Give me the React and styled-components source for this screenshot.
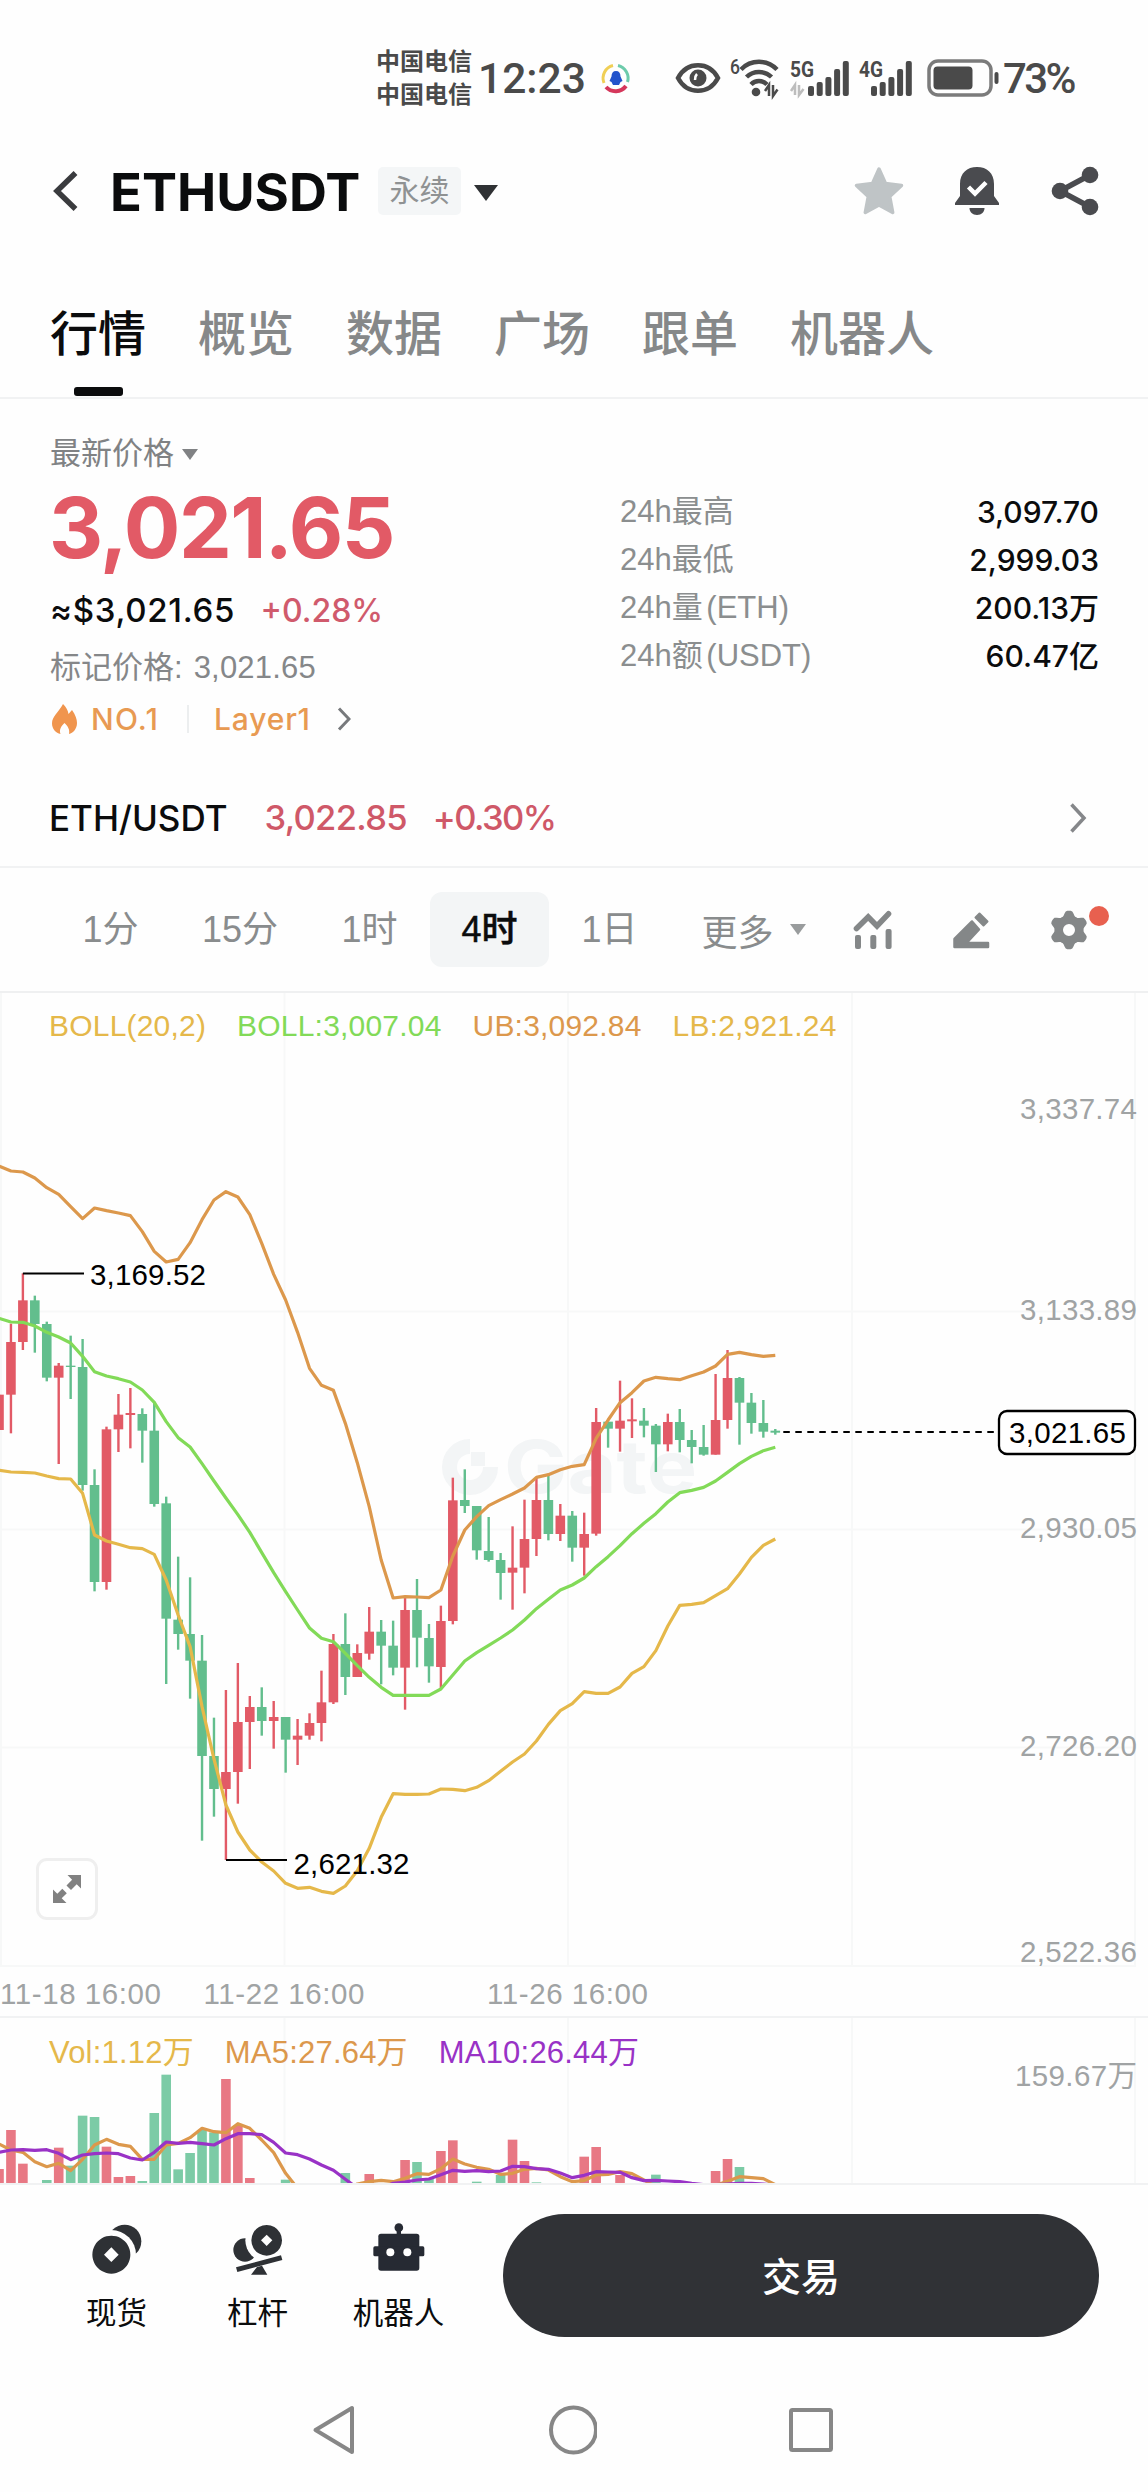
import React from "react";
import styled, { createGlobalStyle } from "styled-components";

const RED = "#e25a66";
const GREEN = "#62be8d";
const ORANGE = "#dc984c";
const LIME = "#82da58";
const YELLOW = "#e5b84a";
const PURPLE = "#9932c6";

const STEP = 11.943;
const xAt = (i) => i * STEP - 1;
// chart values are kept in thirds of a pixel below a base line
const scale = (base, values) => values.map((v) => base + v / 3);
const scaleRows = (base, rows) =>
  rows.map(([color, ...ys]) => [color, ...scale(base, ys)]);

// color, high, body top, body bottom, low
const candles = [
  ...scaleRows(1080, [
    ["r", 944, 944, 1050, 1050],
    ["r", 731, 786, 944, 1060],
    ["r", 580, 661, 786, 810],
    ["g", 647, 661, 732, 818],
    ["g", 725, 732, 893, 904],
    ["r", 849, 857, 893, 1152],
    ["g", 767, 857, 861, 957],
    ["g", 777, 861, 1215, 1232],
    ["g", 1168, 1215, 1506, 1534],
    ["r", 1040, 1048, 1506, 1529],
    ["r", 942, 1004, 1048, 1116],
    ["r", 924, 999, 1005, 1105],
    ["g", 985, 1002, 1052, 1148],
    ["g", 965, 1052, 1272, 1280],
    ["g", 1250, 1270, 1616, 1812],
  ]),
  ...scaleRows(1500, [
    ["g", 170, 359, 402, 449],
    ["g", 232, 402, 482, 596],
    ["g", 405, 482, 768, 1022],
    ["g", 653, 768, 867, 950],
    ["r", 570, 816, 867, 1080],
    ["r", 489, 666, 816, 911],
    ["r", 588, 621, 666, 807],
    ["g", 562, 621, 663, 707],
    ["r", 603, 651, 663, 746],
    ["g", 651, 651, 719, 818],
    ["r", 657, 707, 719, 795],
    ["r", 640, 669, 707, 719],
    ["r", 512, 607, 669, 724],
    ["r", 402, 432, 607, 612],
    ["g", 340, 432, 531, 585],
    ["r", 433, 459, 531, 531],
    ["r", 321, 395, 461, 479],
    ["g", 360, 395, 437, 553],
    ["g", 362, 437, 503, 526],
    ["r", 294, 330, 503, 629],
    ["g", 237, 330, 413, 502],
    ["g", 372, 414, 499, 548],
  ]),
  ...scaleRows(1300, [
    ["r", 917, 963, 1101, 1165],
    ["r", 533, 601, 963, 973],
    ["g", 508, 600, 618, 639],
    ["g", 618, 618, 751, 779],
    ["g", 651, 753, 780, 785],
    ["g", 759, 780, 819, 899],
    ["r", 679, 803, 818, 929],
    ["r", 599, 717, 803, 880],
    ["r", 532, 600, 717, 768],
    ["g", 522, 600, 702, 721],
    ["r", 612, 647, 702, 723],
    ["g", 633, 647, 743, 785],
    ["r", 638, 702, 743, 827],
    ["r", 324, 366, 701, 707],
    ["g", 365, 365, 386, 443],
    ["r", 242, 362, 386, 455],
    ["r", 295, 358, 364, 414],
    ["g", 324, 362, 377, 412],
    ["g", 372, 377, 433, 516],
    ["r", 341, 366, 433, 454],
    ["g", 327, 366, 420, 457],
    ["g", 390, 420, 441, 490],
    ["g", 375, 441, 464, 467],
    ["r", 222, 360, 464, 464],
    ["r", 150, 234, 360, 386],
    ["g", 231, 234, 308, 434],
    ["g", 279, 308, 369, 401],
    ["g", 300, 369, 395, 413],
    ["g", 387, 392, 398, 404],
  ]),
];

const upper = [
  ...scale(1080, [
    258, 273, 276, 294, 323, 343, 380, 416, 384, 392, 399, 407, 455, 514, 546,
    538, 488, 419, 360, 335, 351, 404, 490, 583, 660, 757, 865, 916, 931, 1030,
    1148, 1280, 1440, 1554, 1550, 1551, 1553,
  ]),
  ...scale(1300, [
    870, 768, 690, 650, 617, 599, 582, 564, 532, 524, 509, 499, 494, 415, 360,
    308, 278, 243, 232, 236, 239, 227, 216, 198, 163, 157, 164, 169, 166,
  ]),
];
const middle = [
  ...scale(1080, [
    715, 726, 727, 738, 757, 771, 789, 829, 875, 888, 896, 906, 930, 967, 1025,
    1073, 1101, 1151, 1203, 1254, 1304, 1357, 1418, 1478, 1535, 1590, 1644,
    1675, 1685, 1720, 1757, 1792, 1822, 1846, 1846, 1846, 1846,
  ]),
  ...scale(1300, [
    1167, 1125, 1083, 1058, 1036, 1014, 990, 960, 926, 898, 870, 855, 834, 800,
    770, 737, 701, 670, 641, 606, 578, 571, 562, 543, 517, 491, 469, 452, 442,
  ]),
];
const lower = [
  ...scale(1080, [1171, 1176, 1177, 1179, 1188, 1196, 1197, 1240]),
  ...scale(1500, [
    105, 123, 133, 143, 146, 163, 240, 345, 440, 620, 777, 915, 996, 1050, 1086,
    1113, 1150, 1165, 1162, 1174, 1180, 1158, 1112, 1045, 952, 881, 883, 883,
    882, 867, 868, 872, 862, 842, 814, 786,
  ]),
  ...scale(1300, [
    1362, 1323, 1273, 1232, 1211, 1175, 1180, 1180, 1161, 1120, 1100, 1052, 978,
    916, 913, 908, 887, 866, 822, 772, 736, 717,
  ]),
];

// index, color, top
const volumes = [
  [0, "r", 627], [1, "r", 510], [2, "r", 611], [4, "g", 660], [5, "r", 563],
  [6, "g", 617], [7, "g", 467], [8, "g", 471], [9, "r", 560], [10, "r", 651],
  [11, "r", 648], [12, "g", 663], [13, "g", 459], [14, "g", 344],
  [15, "g", 628], [16, "g", 579], [17, "g", 510], [18, "g", 517],
  [19, "r", 357], [20, "r", 497], [21, "r", 654], [24, "g", 659],
  [29, "g", 639], [31, "r", 642], [34, "r", 600], [35, "g", 606],
  [36, "g", 655], [37, "r", 573], [38, "r", 541], [40, "g", 665],
  [42, "g", 645], [43, "r", 539], [44, "r", 603], [45, "g", 667],
  [49, "r", 590], [50, "r", 561], [52, "r", 645], [55, "g", 644],
  [60, "r", 633], [61, "r", 597], [62, "g", 621],
];
const ma5 = scale(1960, [
  552, 570, 577, 605, 620, 610, 632, 598, 555, 538, 553, 559, 598, 598, 555,
  550, 533, 505, 515, 518, 491, 505, 540, 578, 640, 685, 700, 700, 700, 690,
  672, 665, 661, 665, 655, 641, 643, 626, 597, 612, 622, 628, 643, 640, 628,
  625, 630, 650, 665, 662, 645, 643, 635, 641, 660, 680, 690, 690, 690, 690,
  676, 664, 650, 653, 656, 674,
]);
const ma10 = scale(1960, [
  577, 570, 569, 571, 569, 580, 599, 585, 581, 579, 581, 594, 600, 577, 546,
  550, 547, 551, 555, 536, 521, 521, 524, 547, 579, 584, 597, 615, 631, 658,
  684, 690, 684, 670, 666, 660, 657, 644, 631, 634, 632, 635, 633, 619, 620,
  626, 628, 639, 653, 646, 635, 636, 637, 653, 662, 661, 663, 665, 670, 674,
  674, 672, 670, 670, 672, 676,
]);

const points = (ys) => ys.map((y, i) => `${xAt(i)},${y}`).join(" ");

const gearPath = () => {
  const pts = [];
  for (let a = 0; a < 360; a += 5) {
    const t = (a * Math.PI) / 180;
    const wave = Math.cos(6 * (t - Math.PI / 2));
    const r = 17.2 + 2.6 * Math.max(-1, Math.min(0.8, wave * 1.3));
    pts.push(`${20 + r * Math.cos(t)} ${20 + r * Math.sin(t)}`);
  }
  return `M${pts.join("L")}Z M26 20a6 6 0 1 0 -12 0a6 6 0 1 0 12 0Z`;
};

const intervals = [
  { label: "1分", width: 118 },
  { label: "15分", width: 138 },
  { label: "1时", width: 118 },
  { label: "4时", width: 119, active: true },
  { label: "1日", width: 118 },
];
const stats = [
  ["24h最高", "3,097.70"],
  ["24h最低", "2,999.03"],
  ["24h量 (ETH)", "200.13万"],
  ["24h额 (USDT)", "60.47亿"],
];

function StatusBar() {
  return (
    <Status>
      <Carriers>
        <span>中国电信</span>
        <span>中国电信</span>
      </Carriers>
      <Clock>12:23</Clock>
      {/* app notification */}
      <StatusIcon $left={16} width="30" height="30" viewBox="0 0 30 30" fill="none">
        <path d="M12 2.5A13 13 0 0 0 3 20" stroke="#f0cf55" strokeWidth="3" />
        <path d="M17 2.5A13 13 0 0 1 26.5 19" stroke="#6dcbab" strokeWidth="3" />
        <path d="M5 24A13 13 0 0 0 25 23" stroke="#d5375b" strokeWidth="4" />
        <path d="M15 8c3 0 4.500 2 4.500 5.500l2 4.500-2 1-1.500 3h-6l-1.500-3-2-1 2-4.500C10.500 10 12 8 15 8Z" fill="#2253cb" />
      </StatusIcon>
      <StatusIcon $left={44} width="46" height="32" viewBox="0 0 46 32" fill="none">
        <path d="M3 16C12 -1 34 -1 43 16C34 33 12 33 3 16Z" stroke="#4a4a4a" strokeWidth="4.500" />
        <circle cx="23" cy="16" r="8.500" fill="#4a4a4a" />
        <path d="M22 12c-2 2-2 4-2 6" stroke="#fff" strokeWidth="2.500" />
      </StatusIcon>
      <StatusIcon $left={9} width="50" height="40" viewBox="0 0 50 40" fill="none">
        <text x="0" y="16" fontSize="21" fontWeight="500" fill="#4a4a4a" textLength="10" lengthAdjust="spacingAndGlyphs">6</text>
        <g stroke="#4a4a4a" strokeWidth="4.500">
          <path d="M11 11.500a25 25 0 0 1 36 0" />
          <path d="M16.500 19a18 18 0 0 1 25 0" />
          <path d="M21 26.500a11 11 0 0 1 16 0" />
        </g>
        <circle cx="26" cy="34" r="4.300" fill="#4a4a4a" />
        <path d="M39 38V27l-4 6M43 27v11l4.500-6.500" stroke="#4a4a4a" strokeWidth="2.500" />
      </StatusIcon>
      <Signal left={10} label="5G" arrows />
      <Signal left={9} label="4G" />
      <StatusIcon $left={14} width="72" height="38" viewBox="0 0 72 38" fill="none">
        <rect x="2" y="2" width="62" height="34" rx="9" stroke="#7b7b7b" strokeWidth="3.500" />
        <rect x="6.500" y="7.500" width="39" height="23" rx="4" fill="#4a4a4a" />
        <rect x="67.500" y="13" width="4" height="12" rx="2" fill="#4a4a4a" />
      </StatusIcon>
      <Battery>73%</Battery>
    </Status>
  );
}

function Signal({ left, label, arrows }) {
  const start = arrows ? 18 : 12;
  return (
    <StatusIcon $left={left} width={arrows ? 60 : 54} height="38" viewBox={arrows ? "0 0 60 38" : "0 0 54 38"}>
      <text x="0" y="17.500" fontSize="22" fontWeight="700" fill="#4a4a4a" textLength="24" lengthAdjust="spacingAndGlyphs">
        {label}
      </text>
      {arrows && <path d="M5 36V26l-4 6M9 26v10l4.500-6" stroke="#bdbdbd" strokeWidth="2.500" fill="none" />}
      {[10, 14, 19, 27, 35].map((h, i) => (
        <rect key={h} x={start + i * 8.700} y={37 - h} width="6" height={h} rx="2" fill="#4a4a4a" />
      ))}
    </StatusIcon>
  );
}

function Header() {
  return (
    <TitleBar>
      <svg width="26" height="40" viewBox="0 0 26 40" fill="none">
        <path d="M22.500 2L4 20l18.500 18" stroke="#3a3b3e" strokeWidth="5.500" />
      </svg>
      <Symbol>ETHUSDT</Symbol>
      <Badge>永续</Badge>
      <Caret $size={12} $height={16} $left={13} $top={3} $color="#2f3134" />
      <Actions>
        <svg width="52" height="50" viewBox="0 0 52 50">
          <path
            d="M26 3l6.500 14.500 16 2-11.800 11 3 16L26 39l-13.700 7.500 3-16L3.500 19.500l16-2Z"
            fill="#bfc4c6"
            stroke="#bfc4c6"
            strokeWidth="3.500"
            strokeLinejoin="round"
          />
        </svg>
        <svg width="46" height="50" viewBox="0 0 46 50" fill="none">
          <path d="M5 18C5 7 12 1 22 1s17 6 17 17v12l5 7v2H0v-2l5-7Z" fill="#4a4b4f" />
          <path d="M14.500 42h15c0 4-3 7-7.500 7s-7.500-3-7.500-7Z" fill="#4a4b4f" />
          <path d="M13.500 21l6.500 6.500L31 16.500" stroke="#fff" strokeWidth="4.500" />
        </svg>
        <svg width="48" height="50" viewBox="0 0 48 50" fill="#4a4b4f">
          <path d="M39 9L9 25l30 16" stroke="#4a4b4f" strokeWidth="5.500" fill="none" />
          <circle cx="39" cy="9" r="8.300" />
          <circle cx="9" cy="25" r="8.300" />
          <circle cx="39" cy="41" r="8.300" />
        </svg>
      </Actions>
    </TitleBar>
  );
}

function Summary() {
  return (
    <SummaryGrid>
      <div>
        <PriceLabel>
          最新价格
          <Caret $size={8.500} $height={11} $left={8} $color="#808284" />
        </PriceLabel>
        <Price>3,021.65</Price>
        <Approx>
          ≈$3,021.65 <em>+0.28%</em>
        </Approx>
        <MarkPrice>
          标记价格:<span>3,021.65</span>
        </MarkPrice>
        <Tags>
          <svg width="27" height="31" viewBox="0 0 27 31">
            <path
              d="M12 0c3 3 5 6 5.500 10l3.500-4c3.500 5 5 9 5 13 0 6-4 10-8 11 1-4-1-8-4.500-11C10 22 8 26 9.500 30 5 29 1 25 1 19.500 1 12 8 8 12 0Z"
              fill="#f0954e"
            />
          </svg>
          <TagText $left={13} $spacing={1.2}>NO.1</TagText>
          <TagDivider />
          <TagText $left={25} $spacing={0.8}>Layer1</TagText>
          <Chevron $left={26} width="14" height="24" viewBox="0 0 14 24" fill="none">
            <path d="M2 1.500L12 12 2 22.500" stroke="#77797c" strokeWidth="3" />
          </Chevron>
        </Tags>
      </div>
      <Stats>
        {stats.map(([label, value]) => (
          <StatRow key={label}>
            <span>{label}</span>
            <b>{value}</b>
          </StatRow>
        ))}
      </Stats>
    </SummaryGrid>
  );
}

function Toolbar() {
  return (
    <IntervalBar>
      {intervals.map((item) => (
        <Interval key={item.label} $width={item.width} $active={item.active}>
          {item.label}
        </Interval>
      ))}
      <More>
        更多
        <Caret $size={8.500} $height={11} $left={16} $color="#999c9d" />
      </More>
      <Tools>
        <svg width="40" height="40" viewBox="0 0 40 40" fill="#848788">
          <path d="M3.500 18.500L15.200 7 24 16 35.500 3.800" stroke="#848788" strokeWidth="5.600" strokeLinecap="round" fill="none" />
          <rect x="2" y="25" width="6" height="14" rx="2" />
          <rect x="17.300" y="25" width="6" height="14" rx="2" />
          <rect x="32.600" y="19" width="6" height="20" rx="2" />
        </svg>
        <svg width="40" height="40" viewBox="0 0 40 40" fill="#848788" stroke="#848788" strokeLinejoin="round">
          <path d="M21 11.500l7 8L15.500 33H37v4H3.500V29Z" strokeWidth="2.500" />
          <path d="M28.500 3.500l8 8-4 4-8-8Z" strokeWidth="2" />
        </svg>
        <Settings>
          <svg width="40" height="40" viewBox="0 0 40 40">
            <path d={gearPath()} fill="#848788" fillRule="evenodd" />
          </svg>
          <Dot />
        </Settings>
      </Tools>
    </IntervalBar>
  );
}

function PriceChart() {
  return (
    <ChartPanel>
      <svg width="1148" height="1024" viewBox="0 993 1148 1024">
        <g stroke="#f7f8f8" strokeWidth="2">
          {[1, 284.500, 568, 852, 1135].map((x) => (
            <path key={x} d={`M${x} 993V1966`} />
          ))}
          {[1311.500, 1529.500, 1747.500, 1966].map((y) => (
            <path key={y} d={`M0 ${y}H1136`} />
          ))}
        </g>

        {/* watermark */}
        <g fill="none" stroke="#f3f5f6" strokeWidth="15">
          <path d="M470 1446.500a20.500 20.500 0 1 0 20.500 20.500" />
          <rect x="471" y="1452" width="14" height="14" fill="#f3f5f6" stroke="none" />
        </g>
        <text x="504" y="1493" fontSize="73" fontWeight="700" fontFamily="Inter" fill="#f3f5f6" textLength="193" lengthAdjust="spacingAndGlyphs">
          Gate
        </text>

        {candles.map(([color, high, top, bottom, low], i) => (
          <g key={i} fill={color === "r" ? RED : GREEN}>
            <rect x={xAt(i) - 1.200} y={high} width="2.400" height={low - high} />
            <rect x={xAt(i) - 4.800} y={top} width="9.600" height={bottom - top} />
          </g>
        ))}

        <g fill="none" strokeWidth="3.200" strokeLinejoin="round">
          <polyline points={points(middle)} stroke={LIME} />
          <polyline points={points(upper)} stroke={ORANGE} />
          <polyline points={points(lower)} stroke={YELLOW} />
        </g>

        <path d="M22.900 1273.500H84M226 1860H287" stroke="#000" strokeWidth="2" />
        <g fontSize="29.500" fill="#000">
          <text x="90" y="1284.500" textLength="116">3,169.52</text>
          <text x="293.500" y="1873.500" textLength="116">2,621.32</text>
        </g>

        <path d="M783.300 1432H996" stroke="#000" strokeWidth="2" strokeDasharray="6.500 5.500" />
        <rect x="999" y="1411" width="136" height="43" rx="8" fill="#fff" stroke="#000" strokeWidth="2.300" />
        <text x="1009" y="1442.500" fontSize="29.500" textLength="117">3,021.65</text>

        <g fontSize="29.500" fill="#a0a3a4">
          {[
            ["3,337.74", 1118.500],
            ["3,133.89", 1319.500],
            ["2,930.05", 1537.500],
            ["2,726.20", 1755.500],
            ["2,522.36", 1961.500],
          ].map(([label, y]) => (
            <text key={label} x="1020" y={y} textLength="117">
              {label}
            </text>
          ))}
          <text x="0" y="2003.500" textLength="161">11-18 16:00</text>
          <text x="203.500" y="2003.500" textLength="161">11-22 16:00</text>
          <text x="487" y="2003.500" textLength="161">11-26 16:00</text>
        </g>
      </svg>
      <Legend $top={15}>
        <LegendItem $color={YELLOW}>BOLL(20,2)</LegendItem>
        <LegendItem $color={LIME}>BOLL:3,007.04</LegendItem>
        <LegendItem $color={ORANGE}>UB:3,092.84</LegendItem>
        <LegendItem $color={YELLOW}>LB:2,921.24</LegendItem>
      </Legend>
      <Expand>
        <svg width="30" height="30" viewBox="0 0 30 30" fill="#818181">
          <path d="M15.500 1H29v13.500l-4.300-4.300-5.700 5.700-4.500-4.500 5.600-5.600Z M14.500 29H1V15.500l4.300 4.300 5-5 4.500 4.500-5.100 5Z" />
        </svg>
      </Expand>
    </ChartPanel>
  );
}

function VolumeChart() {
  return (
    <VolumePanel>
      <svg width="1148" height="165" viewBox="0 2018 1148 165">
        <g stroke="#f7f8f8" strokeWidth="2">
          {[284.500, 568, 852, 1135].map((x) => (
            <path key={x} d={`M${x} 2018V2183`} />
          ))}
        </g>
        {volumes.map(([i, color, top]) => (
          <rect
            key={i}
            x={xAt(i) - 4.800}
            y={1960 + top / 3}
            width="9.600"
            height={223 - top / 3}
            fill={color === "r" ? "#e87884" : "#7ccba6"}
          />
        ))}
        <g fill="none" strokeWidth="3.200" strokeLinejoin="round">
          <polyline points={points(ma5)} stroke={ORANGE} />
          <polyline points={points(ma10)} stroke={PURPLE} />
        </g>
        <text x="1015" y="2086" fontSize="29.500" fill="#a0a3a4" textLength="122">
          159.67万
        </text>
      </svg>
      <Legend $top={17}>
        <LegendItem $color={YELLOW} $size={31}>Vol:1.12万</LegendItem>
        <LegendItem $color={ORANGE} $size={31}>MA5:27.64万</LegendItem>
        <LegendItem $color={PURPLE} $size={31}>MA10:26.44万</LegendItem>
      </Legend>
    </VolumePanel>
  );
}

function BottomBar() {
  return (
    <TradeBar>
      <Shortcut>
        <svg width="52" height="54" viewBox="62 38 156 162" fill="#2e3135">
          <mask id="coin">
            <rect x="0" y="0" width="300" height="300" fill="#fff" />
            <circle cx="123" cy="133" r="74" fill="#000" />
          </mask>
          <circle cx="163" cy="93" r="50" mask="url(#coin)" />
          <path d="M123 76a57 57 0 1 0 .1 0ZM123 111l22 22-22 22-22-22Z" fillRule="evenodd" />
        </svg>
        现货
      </Shortcut>
      <Shortcut>
        <svg width="52" height="54" viewBox="485 38 156 162" fill="#2e3135">
          <mask id="lever" maskUnits="userSpaceOnUse" x="400" y="0" width="300" height="300">
            <rect x="400" y="0" width="300" height="300" fill="#fff" />
            <circle cx="589" cy="90" r="64" fill="#000" />
          </mask>
          <circle cx="524" cy="119" r="35" mask="url(#lever)" />
          <path d="M589 44a46 46 0 1 0 .1 0ZM589 73l17 17-17 17-17-17Z" fillRule="evenodd" />
          <path d="M497 171l135-36 4 14-135 36ZM560 170l15-4 16 27h-49Z" />
        </svg>
        杠杆
      </Shortcut>
      <Shortcut>
        <svg width="52" height="54" viewBox="908 38 156 162" fill="#262a33">
          <rect x="924" y="70" width="123" height="111" rx="8" />
          <rect x="909" y="108" width="153" height="30" rx="5" />
          <rect x="979" y="55" width="13" height="20" />
          <circle cx="985.500" cy="52" r="13" />
          <circle cx="960" cy="126" r="12" fill="#fff" />
          <circle cx="1011" cy="126" r="12" fill="#fff" />
        </svg>
        机器人
      </Shortcut>
      <TradeButton>交易</TradeButton>
    </TradeBar>
  );
}

export default function App() {
  return (
    <Page>
      <GlobalStyle />
      <StatusBar />
      <Header />
      <Tabs>
        <Tab $active>行情</Tab>
        <Tab>概览</Tab>
        <Tab>数据</Tab>
        <Tab>广场</Tab>
        <Tab>跟单</Tab>
        <Tab>机器人</Tab>
      </Tabs>
      <Summary />
      <PairRow>
        <span>ETH/USDT</span>
        <PairValue $left={37} $spacing={-0.7}>3,022.85</PairValue>
        <PairValue $left={26} $spacing={-1.6}>+0.30%</PairValue>
        <PairArrow width="18" height="32" viewBox="0 0 18 32" fill="none">
          <path d="M2.500 2.500L15 16 2.500 29.500" stroke="#85878a" strokeWidth="3.500" />
        </PairArrow>
      </PairRow>
      <Toolbar />
      <PriceChart />
      <VolumeChart />
      <BottomBar />
      <SystemNav>
        <svg width="44" height="52" viewBox="0 0 44 52">
          <path d="M3.500 26L40 4v44Z" />
        </svg>
        <svg width="50" height="50" viewBox="0 0 50 50">
          <circle cx="26.500" cy="25" r="22.500" />
        </svg>
        <svg width="46" height="46" viewBox="0 0 46 46">
          <rect x="3" y="3" width="40" height="40" rx="1.500" />
        </svg>
      </SystemNav>
    </Page>
  );
}

const GlobalStyle = createGlobalStyle`
  * {
    box-sizing: border-box;
  }
  body {
    margin: 0;
    background: #fefefe;
  }
  svg {
    display: block;
    flex: none;
  }
`;
const Page = styled.div`
  width: 1148px;
  height: 2492px;
  overflow: hidden;
  background: #fefefe;
  color: #0b0c0d;
  font-family: "Liberation Sans", "Noto Sans CJK SC", sans-serif;
`;
const Status = styled.div`
  display: flex;
  align-items: center;
  height: 156px;
  padding-left: 376px;
  color: #4a4a4a;
  font-family: Roboto, "Noto Sans CJK SC", sans-serif;
`;
const Carriers = styled.div`
  display: flex;
  flex-direction: column;
  width: 97px;
  padding-top: 2px;
  font-size: 24px;
  font-weight: 600;
  line-height: 33px;
`;
const Clock = styled.div`
  width: 112px;
  padding-left: 5px;
  font-size: 42.5px;
  font-weight: 500;
  white-space: nowrap;
`;
const StatusIcon = styled.svg`
  margin-left: ${(p) => p.$left}px;
  overflow: visible;
`;
const Battery = styled.div`
  margin-left: 4px;
  font-size: 42px;
  font-weight: 500;
  letter-spacing: -2.6px;
`;
const TitleBar = styled.header`
  display: flex;
  align-items: center;
  height: 70px;
  padding: 0 49px 0 53px;
`;
const Symbol = styled.h1`
  width: 250px;
  margin: 2px 0 0 31px;
  font-family: Inter, sans-serif;
  font-size: 52.5px;
  font-weight: 700;
  line-height: 70px;
`;
const Badge = styled.span`
  width: 83px;
  margin-left: 18px;
  border-radius: 5px;
  background: #f4f6f7;
  color: #8f9293;
  font-size: 30px;
  line-height: 48px;
  text-align: center;
`;
const Caret = styled.i`
  flex: none;
  margin: ${(p) => p.$top || 0}px 0 0 ${(p) => p.$left}px;
  border: solid transparent;
  border-width: ${(p) => p.$height}px ${(p) => p.$size}px 0;
  border-top-color: ${(p) => p.$color};
`;
const Actions = styled.div`
  display: flex;
  align-items: center;
  gap: 50px;
  margin-left: auto;
`;
const Tabs = styled.nav`
  display: flex;
  gap: 52px;
  height: 173px;
  padding: 79px 50px 0;
  border-bottom: 2px solid #f1f2f3;
`;
const Tab = styled.div`
  display: flex;
  flex-direction: column;
  align-items: center;
  color: ${(p) => (p.$active ? "#0b0c0d" : "#868889")};
  font-size: 48px;
  font-weight: 500;
  line-height: 60px;
  white-space: nowrap;
  &::after {
    content: "";
    width: 49px;
    height: 9px;
    margin-top: 22px;
    border-radius: 3px;
    background: ${(p) => (p.$active ? "#0b0c0d" : "transparent")};
  }
`;
const SummaryGrid = styled.section`
  display: grid;
  grid-template-columns: 570px 479px;
  height: 370px;
  padding: 37px 49px 0 50px;
`;
const PriceLabel = styled.div`
  display: flex;
  align-items: center;
  color: #808284;
  font-size: 31px;
  line-height: 36px;
`;
const Price = styled.div`
  margin: 14px 0 0 -1px;
  color: ${RED};
  font-family: Inter, sans-serif;
  font-size: 84px;
  font-weight: 650;
  line-height: 84px;
  letter-spacing: -1.6px;
`;
const Approx = styled.div`
  margin-top: 20px;
  font-family: Inter, sans-serif;
  font-size: 33px;
  font-weight: 500;
  line-height: 40px;
  letter-spacing: 0.7px;
  em {
    margin-left: 16px;
    color: #d05a6c;
    font-size: 32px;
    font-style: normal;
    letter-spacing: 0;
  }
`;
const MarkPrice = styled.div`
  margin-top: 19px;
  color: #858789;
  font-size: 31px;
  line-height: 36px;
  span {
    margin-left: 11px;
    letter-spacing: 0.2px;
  }
`;
const Tags = styled.div`
  display: flex;
  align-items: center;
  height: 36px;
  margin: 15px 0 0 1px;
`;
const TagText = styled.span`
  margin-left: ${(p) => p.$left}px;
  color: #e89a52;
  font-family: Inter, sans-serif;
  font-size: 30px;
  font-weight: 500;
  letter-spacing: ${(p) => p.$spacing}px;
`;
const TagDivider = styled.i`
  width: 2px;
  height: 28px;
  margin-left: 28px;
  background: #eceeef;
`;
const Chevron = styled.svg`
  margin-left: ${(p) => p.$left}px;
`;
const Stats = styled.div`
  display: flex;
  flex-direction: column;
  padding-top: 52px;
`;
const StatRow = styled.div`
  display: flex;
  justify-content: space-between;
  color: #8b8e8f;
  font-size: 31px;
  line-height: 48px;
  word-spacing: -5px;
  b {
    color: #0b0c0d;
    font-family: Inter, "Noto Sans CJK SC", sans-serif;
    font-size: 30px;
    font-weight: 500;
  }
`;
const PairRow = styled.section`
  display: flex;
  align-items: center;
  height: 99px;
  padding: 0 61px 0 49px;
  border-bottom: 2px solid #f1f2f3;
  font-family: Inter, sans-serif;
  font-size: 35px;
  font-weight: 500;
`;
const PairValue = styled.span`
  margin-left: ${(p) => p.$left}px;
  color: #cf5868;
  font-size: 34.5px;
  letter-spacing: ${(p) => p.$spacing}px;
`;
const PairArrow = styled.svg`
  margin-left: auto;
`;
const IntervalBar = styled.section`
  display: flex;
  align-items: center;
  gap: 1.5px;
  height: 125px;
  padding-left: 51px;
  border-bottom: 2px solid #eff0f1;
  color: #898c8d;
  font-size: 36px;
`;
const Interval = styled.div`
  width: ${(p) => p.$width}px;
  padding-left: 1px;
  border-radius: 12px;
  background: ${(p) => (p.$active ? "#f3f5f6" : "transparent")};
  color: ${(p) => (p.$active ? "#0b0c0d" : "inherit")};
  font-weight: ${(p) => (p.$active ? 500 : 400)};
  -webkit-text-stroke: ${(p) => (p.$active ? "0.5px #0b0c0d" : "0")};
  line-height: 75px;
  text-align: center;
`;
const More = styled.div`
  display: flex;
  align-items: center;
  margin-left: 32px;
`;
const Tools = styled.div`
  display: flex;
  gap: 58px;
  margin-left: 46px;
`;
const Settings = styled.div`
  position: relative;
`;
const Dot = styled.i`
  position: absolute;
  top: -4px;
  right: -20px;
  width: 20px;
  height: 20px;
  border-radius: 50%;
  background: #e8604f;
`;
const ChartPanel = styled.section`
  position: relative;
  height: 1025px;
  border-bottom: 2px solid #f1f2f3;
`;
const VolumePanel = styled.section`
  position: relative;
  height: 167px;
  border-bottom: 2px solid #f1f2f3;
`;
const Legend = styled.div`
  position: absolute;
  top: ${(p) => p.$top}px;
  left: 49px;
  display: flex;
  gap: 31px;
`;
const LegendItem = styled.span`
  color: ${(p) => p.$color};
  font-size: ${(p) => p.$size || 30}px;
  line-height: 36px;
  letter-spacing: 0.2px;
`;
const Expand = styled.button`
  position: absolute;
  top: 865px;
  left: 36px;
  display: grid;
  place-items: center;
  width: 62px;
  height: 62px;
  padding: 0;
  border: 3px solid #efefef;
  border-radius: 11px;
  background: #fff;
`;
const TradeBar = styled.footer`
  display: flex;
  height: 185px;
  padding: 29px 49px 0 46px;
`;
const Shortcut = styled.div`
  display: flex;
  flex-direction: column;
  align-items: center;
  gap: 12px;
  width: 141px;
  padding-top: 9px;
  color: #0b0c0d;
  font-size: 30.5px;
  line-height: 48px;
`;
const TradeButton = styled.button`
  flex: 1;
  height: 123px;
  margin-left: 34px;
  padding: 0 0 4px;
  border: none;
  border-radius: 62px;
  background: #303236;
  color: #fff;
  font-family: inherit;
  font-size: 39px;
  font-weight: 500;
`;
const SystemNav = styled.nav`
  display: flex;
  align-items: center;
  justify-content: space-between;
  height: 120px;
  padding: 0 314px 0 312px;
  fill: none;
  stroke: #878787;
  stroke-width: 4px;
  stroke-linejoin: round;
`;
